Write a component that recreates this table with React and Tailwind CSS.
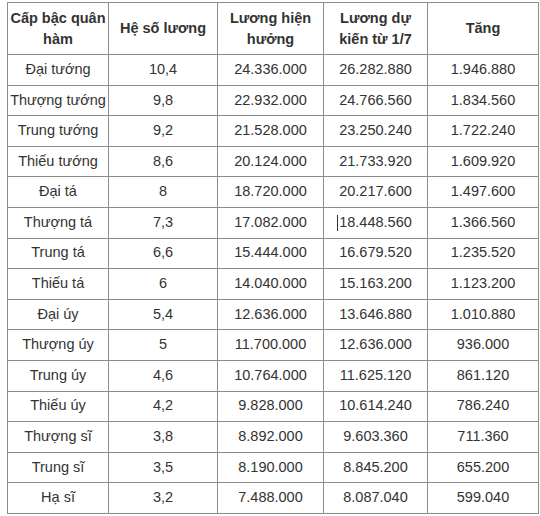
import React from "react";

const rows = [
  ["Đại tướng", "10,4", "24.336.000", "26.282.880", "1.946.880"],
  ["Thượng tướng", "9,8", "22.932.000", "24.766.560", "1.834.560"],
  ["Trung tướng", "9,2", "21.528.000", "23.250.240", "1.722.240"],
  ["Thiếu tướng", "8,6", "20.124.000", "21.733.920", "1.609.920"],
  ["Đại tá", "8", "18.720.000", "20.217.600", "1.497.600"],
  ["Thượng tá", "7,3", "17.082.000", "18.448.560", "1.366.560"],
  ["Trung tá", "6,6", "15.444.000", "16.679.520", "1.235.520"],
  ["Thiếu tá", "6", "14.040.000", "15.163.200", "1.123.200"],
  ["Đại úy", "5,4", "12.636.000", "13.646.880", "1.010.880"],
  ["Thượng úy", "5", "11.700.000", "12.636.000", "936.000"],
  ["Trung úy", "4,6", "10.764.000", "11.625.120", "861.120"],
  ["Thiếu úy", "4,2", "9.828.000", "10.614.240", "786.240"],
  ["Thượng sĩ", "3,8", "8.892.000", "9.603.360", "711.360"],
  ["Trung sĩ", "3,5", "8.190.000", "8.845.200", "655.200"],
  ["Hạ sĩ", "3,2", "7.488.000", "8.087.040", "599.040"],
];

const cell = "border border-[#8c8c8c] text-center align-middle p-0";

const App = () => {
  return (
    <div className="w-[540px] h-[516px] bg-white pt-[2px] pl-[7px] font-['Liberation_Sans',Arial,sans-serif]">
      <table className="border-collapse table-fixed w-[531px] text-[14.5px] text-[#333]">
        <colgroup>
          <col className="w-[101px]" />
          <col className="w-[109px]" />
          <col className="w-[106px]" />
          <col className="w-[104px]" />
          <col className="w-[111px]" />
        </colgroup>
        <thead>
          <tr className="h-[52px] font-bold leading-[21px]">
            <th className={cell}>Cấp bậc quân hàm</th>
            <th className={cell}>Hệ số lương</th>
            <th className={cell}>Lương hiện hưởng</th>
            <th className={cell}>
              Lương dự
              <br />
              kiến từ 1/7
            </th>
            <th className={cell}>Tăng</th>
          </tr>
        </thead>
        <tbody>
          {rows.map((r, i) => (
            <tr key={i} className="h-[30.6px]">
              {r.map((v, j) => (
                <td key={j} className={cell + " whitespace-nowrap"}>
                  {/* stray text cursor left in the original screenshot */}
                  {i === 5 && j === 3 ? (
                    <span className="relative">
                      <span className="absolute left-[-2px] top-[1px] w-px h-[16px] bg-[#333]" />
                      {v}
                    </span>
                  ) : (
                    v
                  )}
                </td>
              ))}
            </tr>
          ))}
        </tbody>
      </table>
    </div>
  );
};

export default App;
